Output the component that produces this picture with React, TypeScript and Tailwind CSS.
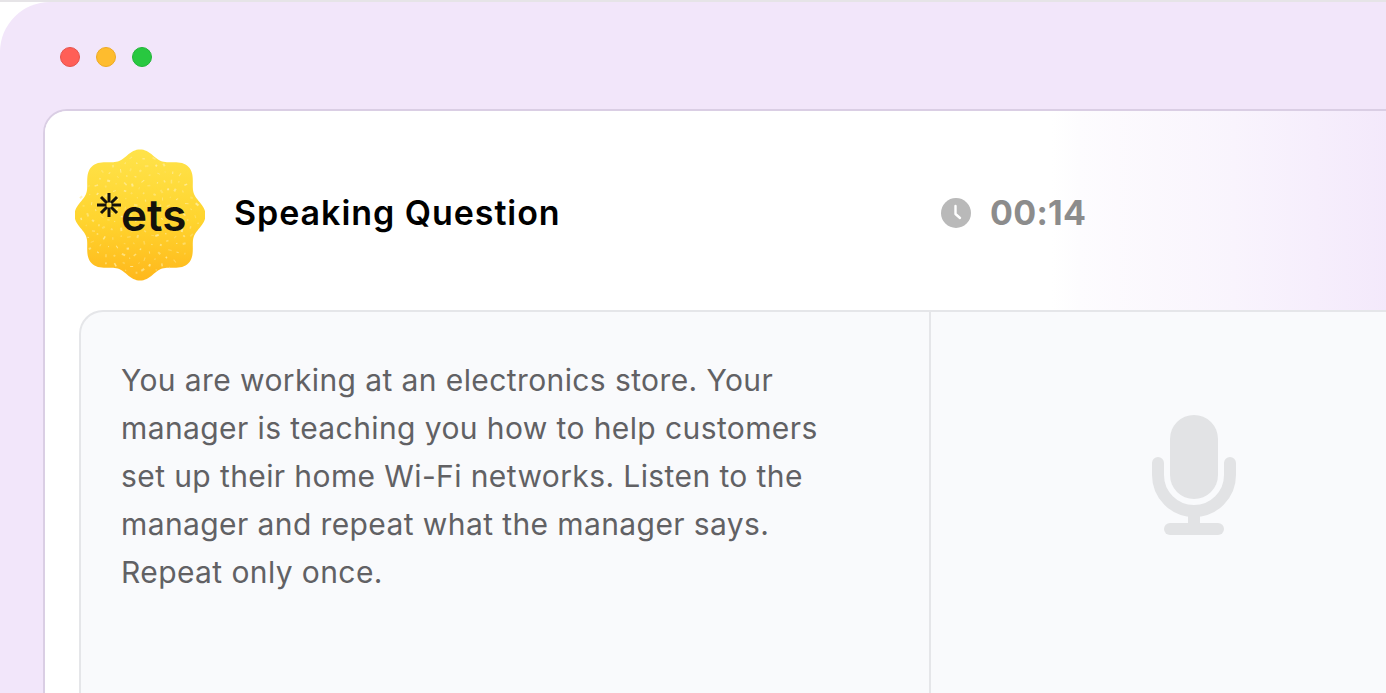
// Speaking question window
const font = 'font-["Inter","Liberation_Sans",sans-serif]';

// wavy badge outline: eight lobes, the diagonal ones pushed out a bit
const badgePoints = Array.from({ length: 240 }, (_, i) => {
  const a = (i / 240) * Math.PI * 2;
  const r = 62.5 + 4.5 * Math.cos(8 * a) - 1.4 * Math.cos(4 * a);
  return `${(65 + r * Math.cos(a)).toFixed(2)},${(66 + r * Math.sin(a)).toFixed(2)}`;
}).join(' ');

// fixed speckles so the picture does not change between runs
const specks = Array.from({ length: 170 }, (_, i) => {
  const a = (i * 137.5 * Math.PI) / 180;
  const r = 60 * Math.sqrt((i + 0.5) / 170);
  return {
    x: 65 + r * Math.cos(a),
    y: 66 + r * Math.sin(a),
    w: 1.2 + ((i * 7) % 5) * 0.6,
    h: 1 + ((i * 11) % 3) * 0.5,
    o: 0.35 + ((i * 3) % 4) * 0.14,
    rot: (i * 53) % 180,
  };
});

function EtsBadge() {
  return (
    <svg width="130" height="132" viewBox="0 0 130 132" className="mt-[5px] shrink-0">
      <defs>
        <linearGradient id="badge" x1="0" y1="0" x2="0" y2="1">
          <stop offset="0" stopColor="#ffe34a" />
          <stop offset="0.55" stopColor="#ffd42e" />
          <stop offset="1" stopColor="#ffb81c" />
        </linearGradient>
      </defs>
      <polygon points={badgePoints} fill="url(#badge)" />
      {specks.map((p, i) => (
        <rect
          key={i}
          x={p.x}
          y={p.y}
          width={p.w}
          height={p.h}
          fill="#ffeea8"
          opacity={p.o}
          transform={`rotate(${p.rot} ${p.x} ${p.y})`}
        />
      ))}
      <g stroke="#14120c" strokeWidth="3" strokeLinecap="butt" transform="translate(34 56)">
        <line x1="0" y1="-12" x2="0" y2="-2.5" />
        <line x1="0" y1="2.5" x2="0" y2="12" />
        <line x1="-12" y1="0" x2="-2.5" y2="0" />
        <line x1="2.5" y1="0" x2="12" y2="0" />
        <line x1="-8" y1="-8" x2="-2" y2="-2" />
        <line x1="2" y1="-2" x2="8" y2="-8" />
        <line x1="-8" y1="8" x2="-2" y2="2" />
        <line x1="2" y1="2" x2="8" y2="8" />
      </g>
      <text x="46" y="82" fontFamily="Inter, sans-serif" fontWeight="600" fontSize="44" fill="#14120c">
        ets
      </text>
    </svg>
  );
}

function ClockIcon() {
  return (
    <svg width="30" height="30" viewBox="0 0 30 30" className="shrink-0">
      <circle cx="15" cy="15" r="15" fill="#b9b9b9" />
      <path d="M14.5 8v8l4.5 4" fill="none" stroke="#fff" strokeWidth="2.4" strokeLinecap="round" strokeLinejoin="round" />
    </svg>
  );
}

function MicIcon() {
  return (
    <svg width="86" height="120" viewBox="0 0 86 120" fill="#e2e3e5">
      <rect x="19" y="0" width="48" height="84" rx="24" />
      <path d="M7 48v12a36 36 0 0 0 72 0V48" fill="none" stroke="#e2e3e5" strokeWidth="12" strokeLinecap="round" />
      <rect x="37" y="94" width="12" height="16" />
      <rect x="13" y="108" width="60" height="12" rx="6" />
    </svg>
  );
}

export default function App() {
  return (
    <div className={`h-[693px] w-[1386px] overflow-hidden bg-white border-t-2 border-[#e6e4e7] ${font}`}>
      <div className="h-full rounded-tl-[50px] bg-[#f2e6fa]">
        {/* Window controls */}
        <div className="flex h-[107px] items-start gap-4 pl-[60px] pt-[45px]">
          <span className="h-5 w-5 rounded-full border border-[#e5534c] bg-[#ff5f57]" />
          <span className="h-5 w-5 rounded-full border border-[#eeaa22] bg-[#febc2e]" />
          <span className="h-5 w-5 rounded-full border border-[#22b438] bg-[#28c840]" />
        </div>

        <div className="ml-[43px] w-[1400px] h-[640px] rounded-tl-[24px] border-l-2 border-t-2 border-[#dacee4] bg-white">
          {/* Header */}
          <div className="flex h-[199px] items-center pl-[30px] pt-[4px] bg-[linear-gradient(90deg,#ffffff_72%,#fdfcfe_74%,#f9f4fd_85%,#f3e8fb_97%)] rounded-tl-[22px]">
            <div className="flex w-[866px] shrink-0 items-center gap-[29px]">
              <EtsBadge />
              <h1 className="text-[34px] font-semibold tracking-[0.95px] text-black">Speaking Question</h1>
            </div>
            <div className="flex items-center gap-[19px]">
              <ClockIcon />
              <span className="text-[34px] font-bold tracking-[0.3px] text-[#8c8c8c]">00:14</span>
            </div>
          </div>

          {/* Question panel */}
          <div className="ml-[34px] flex h-[500px] rounded-tl-[24px] border-l-2 border-t-2 border-[#e5e6e9] bg-[#f9fafc]">
            <div className="w-[848px] shrink-0 pl-[40px] pt-[44px]">
              <p className="w-[740px] text-[30px] leading-[48px] tracking-[0.4px] text-[#616164]">
                You are working at an electronics store. Your manager is teaching you how to help customers set up their home Wi-Fi networks. Listen to the manager and repeat what the manager says. Repeat only once.
              </p>
            </div>
            <div className="flex w-[528px] shrink-0 justify-center border-l-2 border-[#e5e6e9] pt-[103px]">
              <div>
                <MicIcon />
              </div>
            </div>
          </div>
        </div>
      </div>
    </div>
  );
}
